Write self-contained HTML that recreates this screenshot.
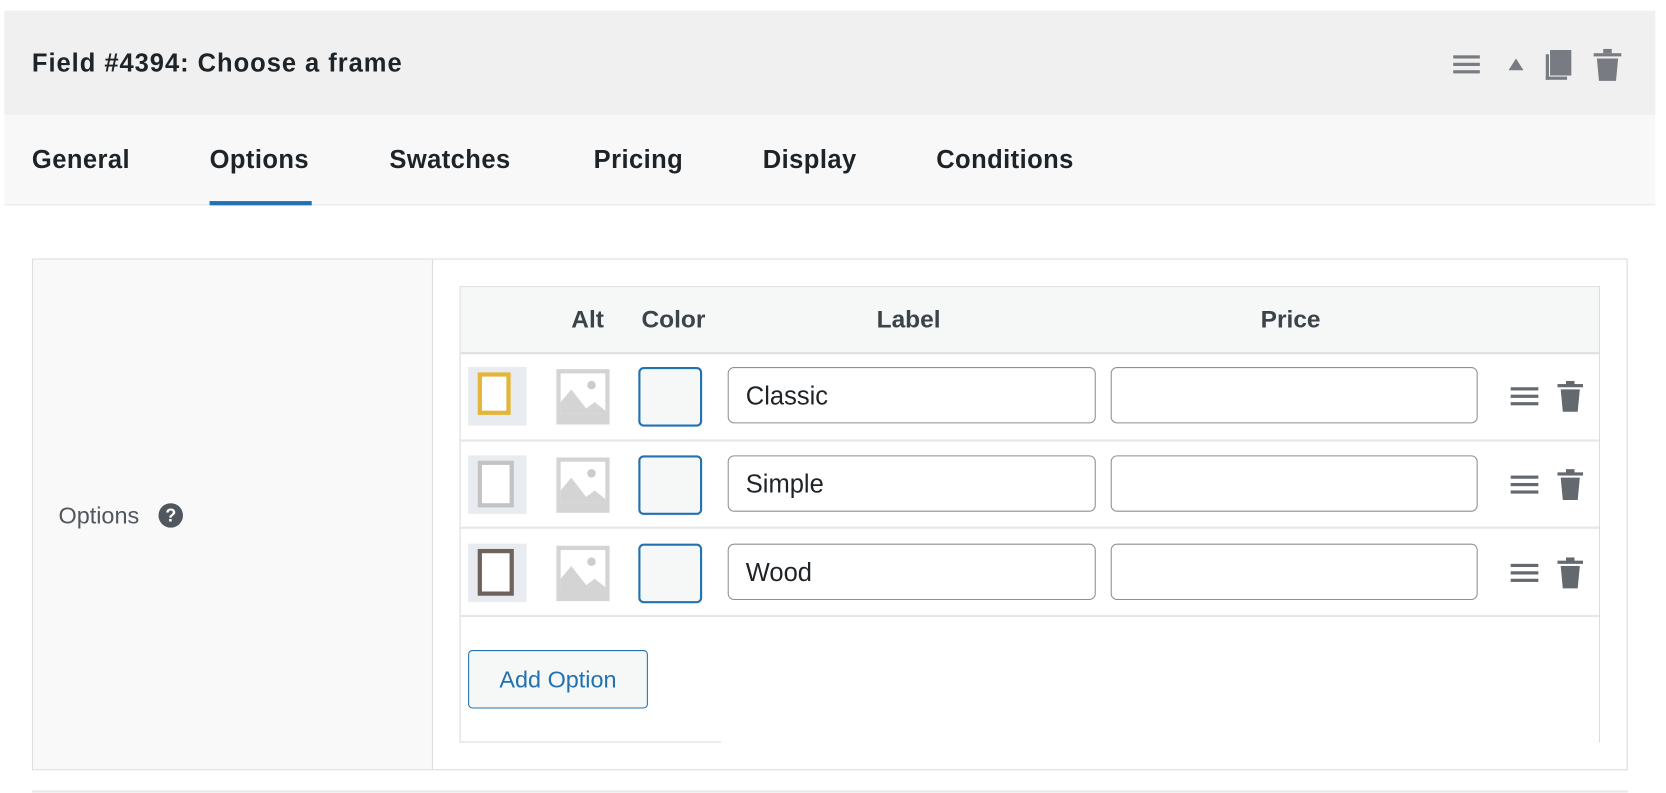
<!DOCTYPE html>
<html><head><meta charset="utf-8"><style>
html,body{margin:0;padding:0;background:#fff;width:1666px;height:792px;overflow:hidden;font-family:"Liberation Sans",sans-serif}
#w{position:absolute;left:0;top:0;width:1566px;height:745px;transform:scale(1.06386);transform-origin:0 0}
.a{position:absolute}
.hdr{left:4px;top:10px;width:1552px;height:98px;background:#f0f0f1}
.tabs{left:4px;top:108px;width:1552px;height:84px;background:#f8f8f8;border-bottom:1px solid #e8e8e8}
.tab{position:absolute;top:137px;font-weight:bold;font-size:24px;color:#1d2327;letter-spacing:0.4px}
.box{left:30px;top:243px;width:1498px;height:479px;border:1px solid #dcdcde;background:#fff}
.lc{left:31px;top:244px;width:375px;height:479px;background:#f9f9f9;border-right:1px solid #dcdcde}
.tbl{left:432px;top:269px;width:1070px;height:428px;border:1px solid #dcdcde;border-bottom:none}
.th{left:433px;top:270px;width:1070px;height:61px;background:#f6f7f7;border-bottom:2px solid #e0e0e0}
.hl{position:absolute;top:287px;font-weight:bold;font-size:23px;color:#3c434a}
.rl{left:433px;width:1070px;height:0;border-top:2px solid #e6e6e6}
.cb{width:56px;height:52px;border:2px solid #2271b1;border-radius:5px;background:#f6f7f7}
.in{height:53px;border:1px solid #8c8f94;border-radius:6px;background:#fff;font-size:24px;color:#1d2327;line-height:53px;padding-left:16px;box-sizing:border-box}
</style></head><body><div id="w">
<div class="a hdr"></div>
<div class="a" style="left:30px;top:46px;font-size:24px;font-weight:bold;color:#1d2327;letter-spacing:0.9px">Field #4394: Choose a frame</div>
<svg class="a" style="left:1360px;top:44px" width="170" height="34" viewBox="0 0 170 34">
<g fill="#787c82"><rect x="6" y="8" width="25" height="3"/><rect x="6" y="15" width="25" height="3"/><rect x="6" y="22" width="25" height="3"/>
<path d="M58 22l7-11 7 11z"/>
<rect x="97" y="3" width="20" height="24"/><rect x="93" y="7" width="3" height="24"/><rect x="93" y="28" width="20" height="3"/>
<rect x="138" y="6" width="26" height="3"/><rect x="147" y="2" width="8" height="4"/><path d="M141 11h20l-2 21h-16z"/></g></svg>
<div class="a tabs"></div>
<div class="tab" style="left:30px">General</div>
<div class="tab" style="left:197px">Options</div>
<div class="tab" style="left:366px">Swatches</div>
<div class="tab" style="left:558px">Pricing</div>
<div class="tab" style="left:717px">Display</div>
<div class="tab" style="left:880px">Conditions</div>
<div class="a" style="left:197px;top:189px;width:96px;height:4px;background:#2271b1"></div>
<div class="a box"></div><div class="a lc"></div>
<div class="a" style="left:55px;top:472px;font-size:22px;color:#50575e">Options</div>
<div class="a" style="left:149px;top:473px;width:23px;height:23px;border-radius:50%;background:#50575e;color:#fff;font-size:17px;font-weight:bold;text-align:center;line-height:23px">?</div>
<div class="a tbl"></div>
<div class="a" style="left:678px;top:697px;width:825px;height:2px;background:#fff"></div>
<div class="a" style="left:432px;top:697px;width:246px;height:1px;background:#dcdcde"></div>
<div class="a th"></div>
<div class="hl" style="left:537px">Alt</div><div class="hl" style="left:603px">Color</div><div class="hl" style="left:824px">Label</div><div class="hl" style="left:1185px">Price</div>
<div class="a rl" style="top:413px"></div><div class="a rl" style="top:495px"></div><div class="a rl" style="top:578px"></div>
<div class="a" style="left:440px;top:345px;width:55px;height:55px;background:#e8ecf0"><div style="margin:5px 0 0 9px;width:31px;height:40px;border:4px solid #e3b53a;box-sizing:border-box;background:#fff"></div></div>
<div class="a" style="left:440px;top:428px;width:55px;height:55px;background:#e8ecf0"><div style="margin:5px 0 0 9px;width:34px;height:44px;border:4px solid #c3c3c3;box-sizing:border-box;background:#fff"></div></div>
<div class="a" style="left:440px;top:511px;width:55px;height:55px;background:#e8ecf0"><div style="margin:5px 0 0 9px;width:34px;height:44px;border:4px solid #6e625a;box-sizing:border-box;background:#fff"></div></div>
<svg class="a" style="left:522px;top:346px" width="52" height="220" viewBox="0 0 52 220">
<defs><g id="ph"><rect x="1" y="1" width="50" height="52" fill="#d4d4d4"/><rect x="5" y="5" width="42" height="38" fill="#fff"/><circle cx="34" cy="16" r="4" fill="#ccc"/><path d="M5 43V32l10-12 14 18 8-6 10 8v3z" fill="#d4d4d4"/></g></defs>
<use href="#ph"/><use href="#ph" y="83"/><use href="#ph" y="166"/></svg>
<div class="a cb" style="left:600px;top:345px"></div><div class="a cb" style="left:600px;top:428px"></div><div class="a cb" style="left:600px;top:511px"></div>
<div class="a in" style="left:684px;top:345px;width:346px">Classic</div>
<div class="a in" style="left:684px;top:428px;width:346px">Simple</div>
<div class="a in" style="left:684px;top:511px;width:346px">Wood</div>
<div class="a in" style="left:1044px;top:345px;width:345px"></div>
<div class="a in" style="left:1044px;top:428px;width:345px"></div>
<div class="a in" style="left:1044px;top:511px;width:345px"></div>
<svg class="a" style="left:1416px;top:358px" width="80" height="200" viewBox="0 0 80 200">
<defs><g id="ic" fill="#646970"><rect x="4" y="6" width="26" height="3"/><rect x="4" y="13" width="26" height="3"/><rect x="4" y="20" width="26" height="3"/>
<rect x="48" y="3" width="24" height="3"/><rect x="56" y="0" width="8" height="4"/><path d="M51 8h18l-2 21h-14z"/></g></defs>
<use href="#ic"/><use href="#ic" y="83"/><use href="#ic" y="166"/></svg>
<div class="a" style="left:440px;top:611px;width:169px;height:55px;box-sizing:border-box;border:1px solid #2271b1;border-radius:4px;background:#f6f7f7;color:#2271b1;font-size:22px;text-align:center;line-height:53px">Add Option</div>
<div class="a" style="left:30px;top:743px;width:1500px;height:2px;background:#e8e8e8"></div>
</div></body></html>
